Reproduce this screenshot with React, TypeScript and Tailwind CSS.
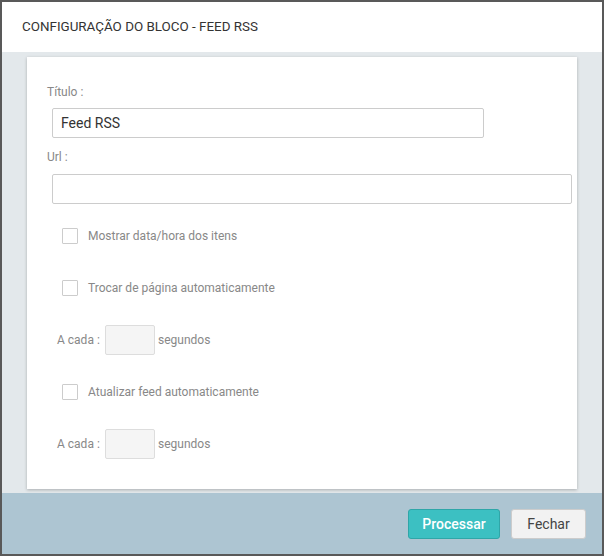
export default function App() {
  return (
    <div className="w-[604px] h-[556px] border-2 border-[#595959] bg-white flex flex-col font-['Roboto',sans-serif]">
      <div className="h-[50px] shrink-0 flex items-center pl-[20px] text-[13.4px] text-[#333]">
        CONFIGURAÇÃO DO BLOCO - FEED RSS
      </div>
      <div className="flex-1 bg-[#e3e8eb] pt-[5px] px-[25px] pb-[4px]">
        <div className="h-[432px] bg-white shadow-[0_1px_3px_rgba(0,0,0,0.25)] pt-[27px] pl-[20px] text-[12px] text-[#888]">
          <div className="h-[16px] leading-[16px]">Título :</div>
          <div className="mt-[8px] ml-[5px] w-[432px] h-[30px] border border-[#ccc] rounded-[2px] flex items-center pl-[8px] text-[14px] text-[#333]">
            Feed RSS
          </div>
          <div className="mt-[11px] h-[16px] leading-[16px]">Url :</div>
          <div className="mt-[9px] ml-[5px] w-[520px] h-[30px] border border-[#ccc] rounded-[2px]" />

          <div className="mt-[24px] ml-[15px] h-[16px] flex items-center gap-[10px]">
            <span className="w-[16px] h-[16px] border border-[#ccc] rounded-[1px] bg-white" />
            <span>Mostrar data/hora dos itens</span>
          </div>
          <div className="mt-[36px] ml-[15px] h-[16px] flex items-center gap-[10px]">
            <span className="w-[16px] h-[16px] border border-[#ccc] rounded-[1px] bg-white" />
            <span>Trocar de página automaticamente</span>
          </div>
          <div className="mt-[29px] ml-[10px] h-[30px] flex items-center">
            <span className="w-[48px]">A cada :</span>
            <span className="w-[50px] h-[30px] bg-[#f5f5f5] border border-[#ddd] rounded-[2px]" />
            <span className="ml-[3px]">segundos</span>
          </div>
          <div className="mt-[29px] ml-[15px] h-[16px] flex items-center gap-[10px]">
            <span className="w-[16px] h-[16px] border border-[#ccc] rounded-[1px] bg-white" />
            <span>Atualizar feed automaticamente</span>
          </div>
          <div className="mt-[29px] ml-[10px] h-[30px] flex items-center">
            <span className="w-[48px]">A cada :</span>
            <span className="w-[50px] h-[30px] bg-[#f5f5f5] border border-[#ddd] rounded-[2px]" />
            <span className="ml-[3px]">segundos</span>
          </div>
        </div>
      </div>
      <div className="h-[61px] shrink-0 bg-[#adc5d2] flex justify-end items-start pt-[16px] pr-[16px] gap-[11px]">
        <button className="w-[92px] h-[30px] bg-[#3cc0c2] border border-[#2fa6a8] rounded-[3px] text-white text-[14px] font-medium">
          Processar
        </button>
        <button className="w-[75px] h-[30px] bg-[#f2f2f2] border border-[#ccc] rounded-[3px] text-[#444] text-[14px]">
          Fechar
        </button>
      </div>
    </div>
  );
}
